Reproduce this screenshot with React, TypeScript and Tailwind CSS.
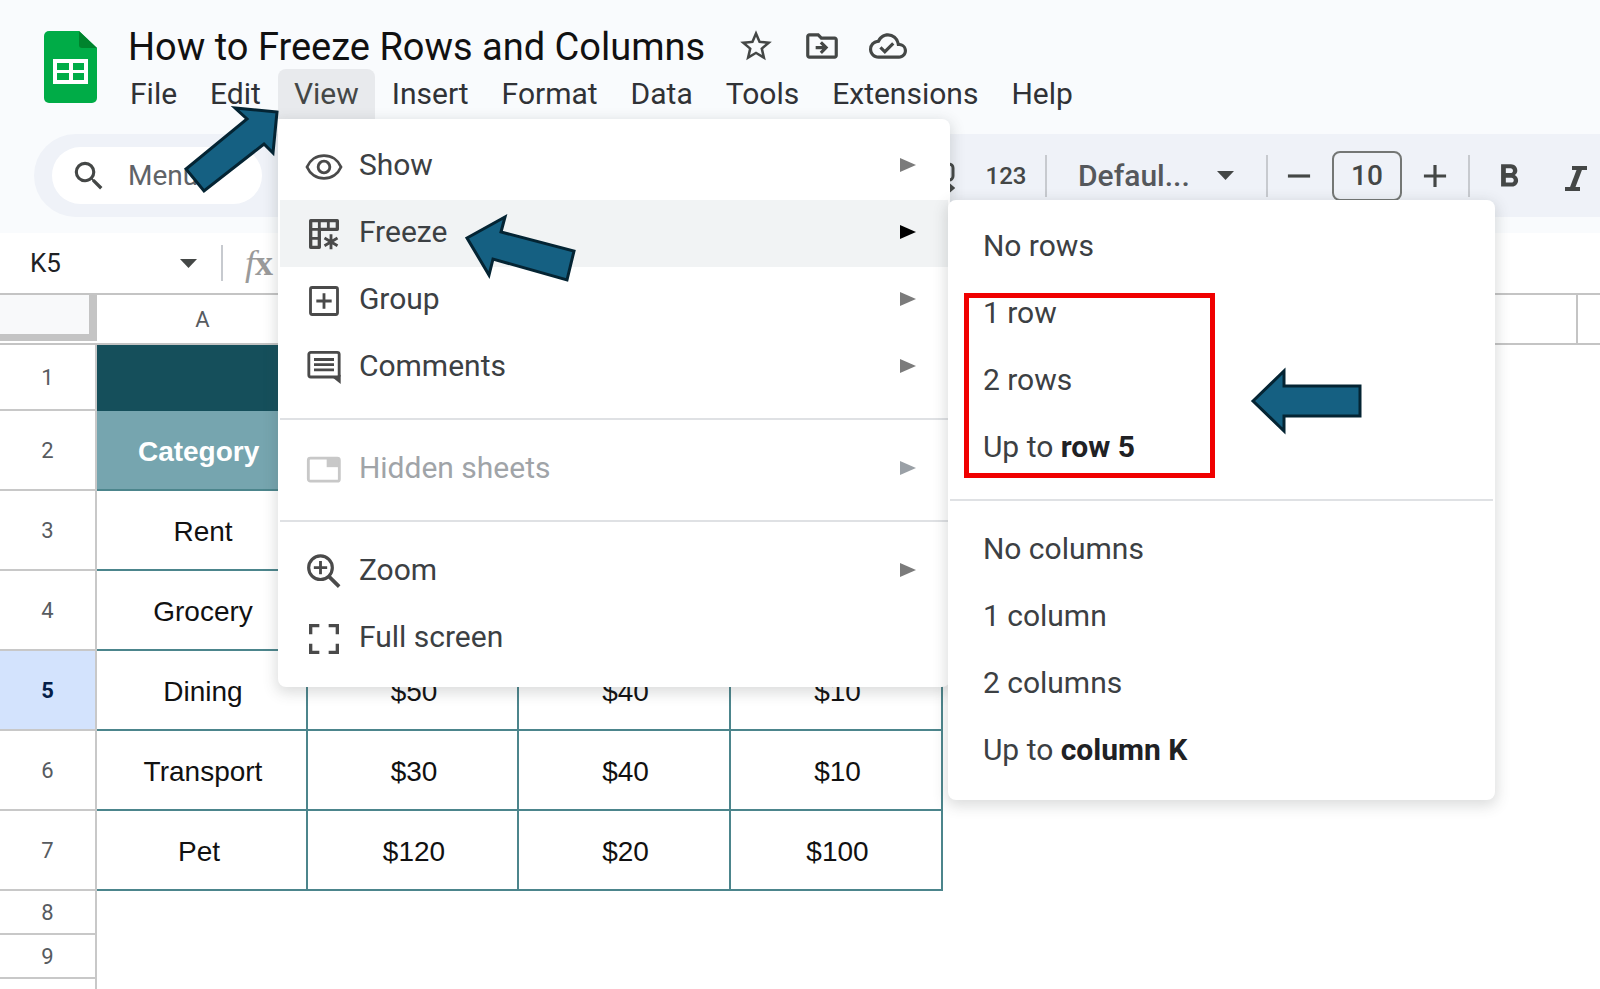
import React from 'react';
import {
    MdAdd,
    MdFormatBold,
    MdOutlineCloudDone,
    MdOutlineDriveFileMove,
    MdRemove,
    MdSearch,
    MdStarBorder,
} from 'react-icons/md';

interface MenuEntry {
    label: string;
    icon: React.ReactNode;
    arrow?: boolean;
    active?: boolean;
    disabled?: boolean;
}

interface SheetRow {
    no: number;
    cells: string[];
}

const MenuIcon = ({ children }: { children: React.ReactNode }) => (
    <svg width="40" height="40" viewBox="0 0 24 24" fill="none" stroke="currentColor" strokeWidth="1.7">
        {children}
    </svg>
);

const ShowIcon = () => (
    <MenuIcon>
        <path d="M1.8 12C3.6 7.8 7.5 5.2 12 5.2s8.4 2.6 10.2 6.8c-1.8 4.2-5.7 6.8-10.2 6.8S3.6 16.2 1.8 12z" />
        <circle cx="12" cy="12" r="3.5" />
    </MenuIcon>
);

const FreezeIcon = () => (
    <MenuIcon>
        <path d="M4 4h16v5.2H9.2V20H4z" strokeLinejoin="round" strokeWidth="2" />
        <path d="M9.2 4v5M14.6 4v5M4 9.2h5M4 14.6h5" />
        <path d="M16.2 12.2v9M12.3 14.4l7.8 4.6M20.1 14.4l-7.8 4.6" />
    </MenuIcon>
);

const GroupIcon = () => (
    <MenuIcon>
        <rect x="3.9" y="3.9" width="16.2" height="16.2" rx="1" />
        <path d="M12 7.4v9.2M7.4 12h9.2" />
    </MenuIcon>
);

const CommentsIcon = () => (
    <MenuIcon>
        <rect x="2.9" y="2.6" width="18.2" height="14.8" rx="1.2" />
        <path d="M6 6.9h12M6 10h12M6 13.1h12" />
        <path d="M17.5 18l4.5 3.6V16z" fill="currentColor" stroke="none" />
    </MenuIcon>
);

const HiddenSheetsIcon = () => (
    <MenuIcon>
        <rect x="2.6" y="4.9" width="18.6" height="13.8" rx="1.2" />
        <path d="M13.6 4.6h7.2v5.7h-7.2z" fill="currentColor" stroke="none" />
    </MenuIcon>
);

const ZoomIcon = () => (
    <MenuIcon>
        <circle cx="9.9" cy="9.4" r="7.1" strokeWidth="1.9" />
        <path d="M14.9 14.6l6.2 6.2" strokeWidth="2.2" />
        <path d="M9.9 5.4v8M5.9 9.4h8" />
    </MenuIcon>
);

const FullScreenIcon = () => (
    <MenuIcon>
        <path d="M9.2 4H4v5.2M14.8 4H20v5.2M9.2 20H4v-5.2M14.8 20H20v-5.2" strokeWidth="2" />
    </MenuIcon>
);

const SheetsLogo = () => (
    <svg width="53" height="72" viewBox="0 0 53 72">
        <path d="M5 0h30l18 17v50a5 5 0 0 1-5 5H5a5 5 0 0 1-5-5V5a5 5 0 0 1 5-5z" fill="#00ac47" />
        <path d="M35 0l18 17H38a3 3 0 0 1-3-3z" fill="#00832d" />
        <path
            d="M9 28h35v25H9zM13 32v7h12v-7zM29 32v7h11v-7zM13 42v7h12v-7zM29 42v7h11v-7z"
            fill="#fff"
            fillRule="evenodd"
        />
    </svg>
);

const Caret = () => (
    <svg width="17" height="9" viewBox="0 0 17 9" fill="#444746">
        <path d="M0 0h17L8.5 9z" />
    </svg>
);

const viewMenu: MenuEntry[][] = [
    [
        { label: 'Show', icon: <ShowIcon />, arrow: true },
        { label: 'Freeze', icon: <FreezeIcon />, arrow: true, active: true },
        { label: 'Group', icon: <GroupIcon />, arrow: true },
        { label: 'Comments', icon: <CommentsIcon />, arrow: true },
    ],
    [{ label: 'Hidden sheets', icon: <HiddenSheetsIcon />, arrow: true, disabled: true }],
    [
        { label: 'Zoom', icon: <ZoomIcon />, arrow: true },
        { label: 'Full screen', icon: <FullScreenIcon /> },
    ],
];

const freezeMenu: { text: string; strong?: string }[][] = [
    [{ text: 'No rows' }, { text: '1 row' }, { text: '2 rows' }, { text: 'Up to ', strong: 'row 5' }],
    [{ text: 'No columns' }, { text: '1 column' }, { text: '2 columns' }, { text: 'Up to ', strong: 'column K' }],
];

const rows: SheetRow[] = [
    { no: 3, cells: ['Rent', '', '', ''] },
    { no: 4, cells: ['Grocery', '', '', ''] },
    { no: 5, cells: ['Dining', '$50', '$40', '$10'] },
    { no: 6, cells: ['Transport', '$30', '$40', '$10'] },
    { no: 7, cells: ['Pet\u00a0', '$120', '$20', '$100'] },
];

const SELECTED_ROW = 5;

function Separator() {
    return <div className="mt-[17px] mb-4 h-[2px] bg-[#dfe1e4]" />;
}

function FreezeMenu() {
    return (
        <div className="absolute top-[81px] left-[670px] w-[547px] rounded-lg bg-white px-[2px] pt-[14px] pb-[15px] shadow-[0_4px_14px_2px_rgba(60,64,67,0.18)]">
            {freezeMenu.map((group, i) => (
                <div key={i}>
                    {i > 0 && <Separator />}
                    {group.map((item) => (
                        <button
                            key={item.text + (item.strong || '')}
                            className="flex h-[67px] w-full items-center pb-[3px] pl-[33px] text-left whitespace-pre text-[#3c4043]"
                        >
                            {item.text}
                            {item.strong && <b className="font-bold text-[#202124]">{item.strong}</b>}
                        </button>
                    ))}
                </div>
            ))}
        </div>
    );
}

function ViewMenu() {
    return (
        <div className="absolute top-[50px] left-0 z-20 w-[672px] rounded-lg rounded-tl-none bg-white px-[2px] pt-[14px] pb-[15px] shadow-[0_4px_14px_2px_rgba(60,64,67,0.18)]">
            {viewMenu.map((group, i) => (
                <div key={i}>
                    {i > 0 && <Separator />}
                    {group.map((item) => (
                        <button
                            key={item.label}
                            disabled={item.disabled}
                            className={`flex h-[67px] w-full items-center pb-[3px] pl-6 pr-8 text-left ${
                                item.active ? 'bg-[#f1f3f4]' : ''
                            } ${item.disabled ? 'text-[#a0a4a8]' : 'text-[#3c4043]'}`}
                        >
                            <span className={`mr-[15px] pt-[3px] ${item.disabled ? 'text-[#c8c8c8]' : 'text-[#4a4a4a]'}`}>
                                {item.icon}
                            </span>
                            <span className="flex-1">{item.label}</span>
                            {item.arrow && (
                                <svg
                                    width="16"
                                    height="14"
                                    viewBox="0 0 16 14"
                                    fill={item.active ? '#000' : item.disabled ? '#9aa0a6' : '#7b7b7b'}
                                >
                                    <path d="M0 0l16 7-16 7z" />
                                </svg>
                            )}
                        </button>
                    ))}
                </div>
            ))}
            <FreezeMenu />
        </div>
    );
}

function MenuBar() {
    const items = ['File', 'Edit', 'View', 'Insert', 'Format', 'Data', 'Tools', 'Extensions', 'Help'];
    return (
        <nav className="-ml-[14px] flex h-[50px] gap-px text-[30px] leading-9 text-[#303236]">
            {items.map((item) =>
                item === 'View' ? (
                    <div key={item} className="relative">
                        <button className="h-full rounded-t-lg bg-[#e8eaed] px-4 text-[#444746]">{item}</button>
                        <ViewMenu />
                    </div>
                ) : (
                    <button key={item} className="h-full px-4">
                        {item}
                    </button>
                )
            )}
        </nav>
    );
}

function Toolbar() {
    return (
        <div className="mt-[15px] mb-4 ml-[34px] flex h-[83px] items-center rounded-l-full bg-[#eff2f8] pl-[18px] pr-1 text-[#444746]">
            <label className="mr-auto flex h-[57px] w-[210px] items-center rounded-full bg-white pl-[18px]">
                <MdSearch size={38} />
                <input
                    aria-label="Menus"
                    placeholder="Menus"
                    className="ml-5 w-[110px] text-[28px] outline-none placeholder:text-[#5f6368]"
                />
            </label>

            <button aria-label="Decrease decimal places">
                <svg width="28" height="38" viewBox="0 0 28 38" fill="none" stroke="#444746" strokeWidth="3">
                    <rect x="17" y="7" width="9" height="16" rx="4" />
                    <path d="M4 31h22M20 26l6 5-6 5" />
                </svg>
            </button>
            <button className="mr-[14px] ml-[26px] w-[50px] text-center text-[24px] font-medium">123</button>
            <div className="mr-px h-[42px] w-[2px] bg-[#c7cacf]" />
            <div className="relative w-[218px]">
                <select
                    aria-label="Font"
                    className="h-12 w-full appearance-none bg-transparent pl-[30px] text-[30px] font-medium text-[#55585c] outline-none"
                >
                    <option>Defaul...</option>
                </select>
                <span className="pointer-events-none absolute inset-y-0 right-8 flex items-center">
                    <Caret />
                </span>
            </div>
            <div className="h-[42px] w-[2px] bg-[#c7cacf]" />
            <button className="ml-3" aria-label="Decrease font size">
                <MdRemove size={38} />
            </button>
            <input
                aria-label="Font size"
                defaultValue="10"
                className="mx-[14px] h-[50px] w-[70px] rounded-lg border-2 border-[#747775] bg-transparent text-center text-[28px] font-medium"
            />
            <button aria-label="Increase font size">
                <MdAdd size={38} />
            </button>
            <div className="mx-[14px] h-[42px] w-[2px] bg-[#c7cacf]" />
            <button className="mr-[30px] ml-[6px] pt-[2px]" aria-label="Bold">
                <MdFormatBold size={38} />
            </button>
            <button className="pt-[2px]" aria-label="Italic">
                <svg width="38" height="38" viewBox="0 0 38 38" fill="none" stroke="currentColor" strokeWidth="4">
                    <path d="M14 10h15M7 31h15" />
                    <path d="M22 10l-8 21" strokeWidth="5" />
                </svg>
            </button>
        </div>
    );
}

function FormulaBar() {
    return (
        <div className="flex h-[60px] items-center bg-white">
            <input
                aria-label="Name box"
                defaultValue="K5"
                className="ml-[30px] w-[150px] text-[26px] text-[#202124] outline-none"
            />
            <button aria-label="Open name box">
                <Caret />
            </button>
            <div className="ml-6 h-9 w-[2px] bg-[#c7cacf]" />
            <span className="ml-[22px] font-['Liberation_Serif'] text-[36px] font-bold text-[#9a9a9a]">
                <i className="font-normal">f</i>x
            </span>
        </div>
    );
}

function RowHeader({ no }: { no: number }) {
    const selected = no === SELECTED_ROW;
    return (
        <th
            className={`border-r-2 border-b-2 border-[#c8c8c8] text-center font-['Roboto'] text-[22px] ${
                selected ? 'bg-[#d3e3fd] font-bold text-[#041e49]' : 'font-normal text-[#575b5f]'
            }`}
        >
            {no}
        </th>
    );
}

function Sheet() {
    const cell = 'border-r-2 border-b-2 border-[#4c858c] pt-1 pl-[3px] text-center';
    return (
        <table className="w-full table-fixed border-separate border-spacing-0 font-['Liberation_Sans'] text-[28px] text-[#111]">
            <colgroup>
                <col className="w-[97px]" />
                <col className="w-[211px]" />
                <col className="w-[211px]" />
                <col className="w-[212px]" />
                <col className="w-[212px]" />
                <col className="w-[635px]" />
                <col />
            </colgroup>
            <thead>
                <tr className="h-[52px] text-[22px]">
                    <th className="border-t-2 border-b-2 border-[#c4c4c4] bg-white p-0 align-top">
                        <div className="h-[46px] border-r-8 border-b-[7px] border-[#c4c4c4] bg-[#f8f9fa]" />
                    </th>
                    <th className="border-y-2 border-[#c4c4c4] font-['Roboto'] font-normal text-[#575b5f]">A</th>
                    <th className="border-y-2 border-[#c4c4c4]" colSpan={3} />
                    <th className="border-y-2 border-r-2 border-[#c4c4c4]" />
                    <th className="border-y-2 border-[#c4c4c4]" />
                </tr>
            </thead>
            <tbody>
                <tr className="h-[66px]">
                    <RowHeader no={1} />
                    <td colSpan={4} className="bg-[#154f5b]" />
                </tr>
                <tr className="h-20">
                    <RowHeader no={2} />
                    <td className="border-b-2 border-[#4c858c] bg-[#76a5af] pt-1 text-center font-bold text-white">
                        Category&nbsp;
                    </td>
                    <td colSpan={3} className="border-b-2 border-[#4c858c] bg-[#76a5af]" />
                </tr>
                {rows.map((row) => (
                    <tr key={row.no} className="h-20">
                        <RowHeader no={row.no} />
                        {row.cells.map((value, i) => (
                            <td key={i} className={cell}>
                                {value}
                            </td>
                        ))}
                    </tr>
                ))}
                {[8, 9].map((no) => (
                    <tr key={no} className="h-11">
                        <RowHeader no={no} />
                    </tr>
                ))}
                <tr className="h-11">
                    <td className="border-r-2 border-[#c8c8c8]" />
                </tr>
            </tbody>
        </table>
    );
}

// Tutorial arrows and the highlighted choice, drawn over the app
function Annotations() {
    return (
        <div className="pointer-events-none absolute inset-0 z-30">
            <div className="absolute top-[293px] left-[964px] h-[185px] w-[251px] border-5 border-[#f00000]" />
            <svg
                className="absolute top-0 left-0"
                width="1600"
                height="500"
                viewBox="0 0 1600 500"
                fill="#156082"
                stroke="#042433"
                strokeWidth="3"
            >
                <path d="M277 112L235 108 247 119 186 169 204 191 264 144 273 153z" />
                <path d="M467 238L505 217 501 232 574 251 567 280 493 259 489 275z" />
                <path d="M1253 401L1284 371V386H1360V416H1284V431z" />
            </svg>
        </div>
    );
}

export default function App() {
    return (
        <div className="relative h-screen overflow-hidden bg-white font-['Roboto',sans-serif]">
            <header className="flow-root bg-[#f9fbfd]">
                <div className="flex pt-6 pl-11">
                    <div className="pt-[7px]">
                        <SheetsLogo />
                    </div>
                    <div className="ml-[31px]">
                        <div className="mb-px flex h-11 items-center">
                            <h1 className="pt-[2px] text-[38px] leading-[42px] text-[#111]">
                                How to Freeze Rows and Columns
                            </h1>
                            <div className="ml-8 flex gap-7 text-[#444746]">
                                <button aria-label="Star">
                                    <MdStarBorder size={38} />
                                </button>
                                <button aria-label="Move">
                                    <MdOutlineDriveFileMove size={38} />
                                </button>
                                <button aria-label="See document status">
                                    <MdOutlineCloudDone size={38} />
                                </button>
                            </div>
                        </div>
                        <MenuBar />
                    </div>
                </div>
                <Toolbar />
            </header>
            <FormulaBar />
            <Sheet />
            <Annotations />
        </div>
    );
}
